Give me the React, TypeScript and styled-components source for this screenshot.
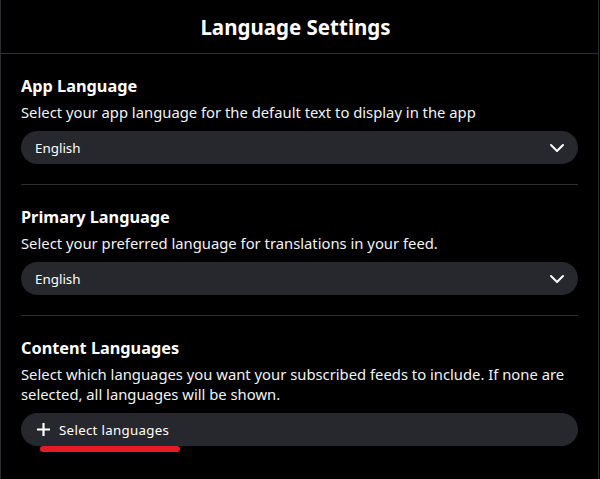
import React from 'react';
import styled, { createGlobalStyle } from 'styled-components';

const GlobalStyle = createGlobalStyle`
  html, body {
    margin: 0;
    padding: 0;
    background: #000;
  }
  body {
    font-family: "Noto Sans", "Open Sans", sans-serif;
    color: #f1f3f5;
  }
`;

interface Section {
  id: string;
  title: string;
  description: string;
  value?: string;
}

const sections: Section[] = [
  {
    id: 'app',
    title: 'App Language',
    description: 'Select your app language for the default text to display in the app',
    value: 'English',
  },
  {
    id: 'primary',
    title: 'Primary Language',
    description: 'Select your preferred language for translations in your feed.',
    value: 'English',
  },
  {
    id: 'content',
    title: 'Content Languages',
    description:
      'Select which languages you want your subscribed feeds to include. If none are selected, all languages will be shown.',
  },
];

function Chevron() {
  return (
    <svg width="18" height="18" viewBox="0 0 24 24" fill="none" stroke="#fff" strokeWidth="2.6" strokeLinecap="round" strokeLinejoin="round">
      <path d="M4 8l8 8 8-8" />
    </svg>
  );
}

function Plus() {
  return (
    <svg width="13" height="13" viewBox="0 0 13 13" fill="none" stroke="#fff" strokeWidth="2.2" strokeLinecap="square">
      <path d="M6.5 1v11M1 6.5h11" />
    </svg>
  );
}

export default function App() {
  return (
    <>
      <GlobalStyle />
      <Page>
        <Header>
          <Title>Language Settings</Title>
        </Header>
        <Body>
          {sections.map((s, i) => (
            <SectionBlock key={s.id} last={i === sections.length - 1}>
              <SectionTitle>{s.title}</SectionTitle>
              <Description>{s.description}</Description>
              {s.value ? (
                <Select>
                  <span>{s.value}</span>
                  <Chevron />
                </Select>
              ) : (
                <AddButton>
                  <Plus />
                  <AddLabel>Select languages</AddLabel>
                  <Underline />
                </AddButton>
              )}
            </SectionBlock>
          ))}
        </Body>
      </Page>
    </>
  );
}

const Page = styled.div`
  width: 597px;
  height: 479px;
  border-left: 1px solid #2b2c31;
  border-right: 1px solid #2b2c31;
  background: #000;
  overflow: hidden;
`;

const Header = styled.div`
  height: 53px;
  display: flex;
  align-items: center;
  justify-content: center;
  padding-right: 8px;
  border-bottom: 1px solid #2e2f34;
`;

const Title = styled.h1`
  margin: 0;
  font-size: 20.5px;
  font-weight: 700;
  color: #fff;
`;

const Body = styled.div`
  padding: 0 20px;
`;

const SectionBlock = styled.div<{ last: boolean }>`
  padding: 20px 0;
  border-bottom: ${({ last }) => (last ? 'none' : '1px solid #2e2f34')};
`;

const SectionTitle = styled.h2`
  margin: 0;
  font-size: 16.3px;
  font-weight: 700;
  line-height: 24px;
  color: #fff;
`;

const Description = styled.p`
  margin: 4px 0 9px;
  font-size: 14.8px;
  line-height: 20px;
  color: #f1f3f5;
`;

const Select = styled.div`
  height: 33px;
  box-sizing: border-box;
  border-radius: 17px;
  background: #27282d;
  display: flex;
  align-items: center;
  justify-content: space-between;
  padding: 0 12px 0 14px;
  font-size: 13.4px;
  color: #fff;
`;

const AddButton = styled.div`
  position: relative;
  height: 33px;
  box-sizing: border-box;
  border-radius: 17px;
  background: #27282d;
  display: flex;
  align-items: center;
  gap: 9px;
  padding: 0 16px;
  font-size: 13.3px;
  color: #fff;
`;

const AddLabel = styled.span`
  letter-spacing: 0.3px;
`;

const Underline = styled.span`
  position: absolute;
  left: 19px;
  top: 33px;
  width: 140px;
  height: 6px;
  border-radius: 3px;
  background: #e51b23;
`;
